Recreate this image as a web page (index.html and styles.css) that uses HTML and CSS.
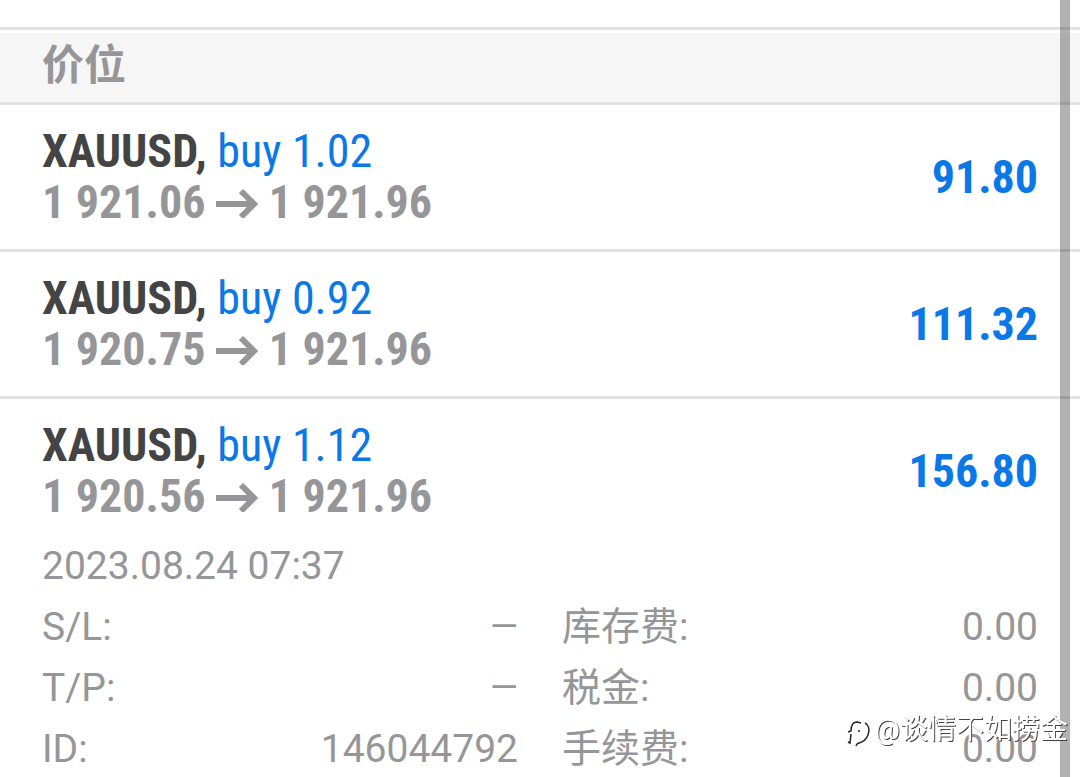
FILE: index.html
```html
<!DOCTYPE html>
<html lang="zh-CN">
<head>
<meta charset="UTF-8" />
<meta name="viewport" content="width=device-width, initial-scale=1" />
<title>价位</title>
<link rel="stylesheet" href="styles.css">
</head>
<body>
  <main class="history">
    <h1 class="section-title">价位</h1>
    <ul class="positions">
      <li class="position">
        <div class="row">
          <div class="info">
            <div class="deal"><b>XAUUSD,</b> <span class="side">buy 1.02</span></div>
            <div class="prices">1 921.06 <svg class="arrow" viewBox="0 0 42 30"><path d="M0 16h38M25 3l13 13-13 13"/></svg> 1 921.96</div>
          </div>
          <div class="profit">91.80</div>
        </div>
      </li>
      <li class="position">
        <div class="row">
          <div class="info">
            <div class="deal"><b>XAUUSD,</b> <span class="side">buy 0.92</span></div>
            <div class="prices">1 920.75 <svg class="arrow" viewBox="0 0 42 30"><path d="M0 16h38M25 3l13 13-13 13"/></svg> 1 921.96</div>
          </div>
          <div class="profit">111.32</div>
        </div>
      </li>
      <li class="position">
        <div class="row">
          <div class="info">
            <div class="deal"><b>XAUUSD,</b> <span class="side">buy 1.12</span></div>
            <div class="prices">1 920.56 <svg class="arrow" viewBox="0 0 42 30"><path d="M0 16h38M25 3l13 13-13 13"/></svg> 1 921.96</div>
          </div>
          <div class="profit">156.80</div>
        </div>
        <div class="details">
          <time class="time">2023.08.24 07:37</time>
          <dl class="fields">
            <div class="field"><dt>S/L:</dt><dd class="empty">—</dd></div>
            <div class="field"><dt>库存费:</dt><dd>0.00</dd></div>
            <div class="field"><dt>T/P:</dt><dd class="empty">—</dd></div>
            <div class="field"><dt>税金:</dt><dd>0.00</dd></div>
            <div class="field"><dt>ID:</dt><dd>146044792</dd></div>
            <div class="field"><dt>手续费:</dt><dd>0.00</dd></div>
          </dl>
        </div>
      </li>
    </ul>
  </main>
  <div class="scrollbar"></div>
  <div class="watermark">
    <svg class="mark" viewBox="0 0 30 40">
      <path d="M3 22l3-1c0-5 2-9 6-9l4 1M6 24l-1 9l-2-1M13 21h2"/>
      <path d="M20 13c4 2 5 7 3 12c-2 5-5 7-9 8c-2 0-2 1-3 3"/>
    </svg>
    <span>@谈情不如捞金</span>
  </div>
</body>
</html>
```

FILE: styles.css
```css
* {
  box-sizing: border-box;
}
body {
  margin: 0;
  background: #fff;
  color: #969698;
  font-family: Roboto, "Noto Sans CJK SC", sans-serif;
  overflow: hidden;
}
.history {
  padding-top: 27px;
}
.section-title {
  margin: 0;
  padding: 0 42px;
  border-top: 3px solid #e3e3e3;
  border-bottom: 3px solid #e3e3e3;
  background: #f6f6f6;
  box-shadow: inset 0 3px #fff;
  font-size: 42px;
  line-height: 72px;
}
.positions {
  list-style: none;
  margin: 0;
  padding: 0;
}
.position {
  padding: 21px 42px;
  border-bottom: 3px solid #e3e3e3;
}
.position:last-child {
  border-bottom: 0;
}
.row {
  display: flex;
  align-items: center;
  justify-content: space-between;
}
.deal,
.prices,
.profit {
  font-family: "Roboto Condensed", Roboto, sans-serif;
  font-size: 46px;
  line-height: 51px;
}
.deal b {
  color: #444;
}
.side {
  color: #0a78e6;
}
.prices {
  font-weight: 700;
}
.arrow {
  width: 42px;
  height: 30px;
  fill: none;
  stroke: currentColor;
  stroke-width: 6;
}
.profit {
  color: #0a78e6;
  font-weight: 700;
}
.details {
  padding-top: 14px;
  font-size: 39px;
  line-height: 61px;
}
.time {
  display: block;
}
.fields {
  display: grid;
  grid-template-columns: 1fr 1fr;
  column-gap: 44px;
  margin: 0;
}
.field {
  display: flex;
  justify-content: space-between;
}
.field dd {
  margin: 0;
}
.field .empty {
  font-size: 36px;
}
.scrollbar {
  position: fixed;
  top: 0;
  right: 10px;
  width: 10px;
  height: 100%;
  background: rgba(0, 0, 0, 0.3);
}
.watermark {
  position: fixed;
  right: 12px;
  bottom: 27px;
  display: flex;
  align-items: center;
  color: #fff;
  font-size: 28px;
  line-height: 40px;
  text-shadow: 1px 1px 0 #444;
}
.mark {
  width: 30px;
  height: 40px;
  fill: none;
  stroke: #222;
  stroke-width: 1.5;
}
```
